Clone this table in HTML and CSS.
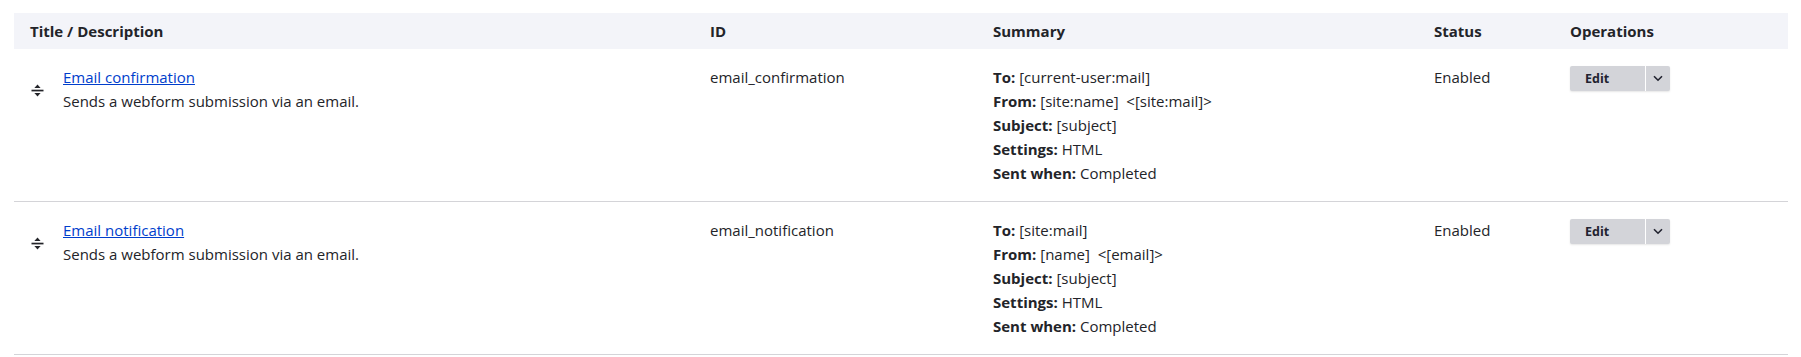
FILE: index.html
```html
<!DOCTYPE html>
<html lang="en">
<head>
    <meta charset="UTF-8">
    <title>Webform handlers</title>
    <link rel="stylesheet" href="styles.css">
</head>
<body>
    <div class="page">
        <table class="handlers">
            <colgroup>
                <col class="col-title">
                <col class="col-id">
                <col class="col-summary">
                <col class="col-status">
                <col class="col-ops">
            </colgroup>
            <thead>
                <tr>
                    <th>Title / Description</th>
                    <th>ID</th>
                    <th>Summary</th>
                    <th>Status</th>
                    <th>Operations</th>
                </tr>
            </thead>
            <tbody>
                <tr>
                    <td>
                        <div class="title-cell">
                            <span class="drag-handle">
                                <svg width="13" height="15" viewBox="0 0 13 15">
                                    <path d="M6.5 1.5 L9.6 5 H3.4 Z" fill="#232429"/>
                                    <rect x="0.5" y="6.7" width="12" height="1.7" fill="#232429"/>
                                    <path d="M6.5 13.5 L9.6 10 H3.4 Z" fill="#232429"/>
                                </svg>
                            </span>
                            <div>
                                <a href="#" class="handler-link">Email confirmation</a>
                                <div>Sends a webform submission via an email.</div>
                            </div>
                        </div>
                    </td>
                    <td>email_confirmation</td>
                    <td>
                        <div><b>To:</b> [current-user:mail]</div>
                        <div><b>From:</b> [site:name]&nbsp; &lt;[site:mail]&gt;</div>
                        <div><b>Subject:</b> [subject]</div>
                        <div><b>Settings:</b> HTML</div>
                        <div><b>Sent when:</b> Completed</div>
                    </td>
                    <td>Enabled</td>
                    <td>
                        <div class="dropbutton">
                            <a href="#" class="dropbutton-action">Edit</a>
                            <span class="dropbutton-toggle">
                                <svg width="10" height="7" viewBox="0 0 10 7">
                                    <path d="M1 1.2 L5 5.2 L9 1.2" fill="none" stroke="#222330" stroke-width="1.6"/>
                                </svg>
                            </span>
                        </div>
                    </td>
                </tr>
                <tr>
                    <td>
                        <div class="title-cell">
                            <span class="drag-handle">
                                <svg width="13" height="15" viewBox="0 0 13 15">
                                    <path d="M6.5 1.5 L9.6 5 H3.4 Z" fill="#232429"/>
                                    <rect x="0.5" y="6.7" width="12" height="1.7" fill="#232429"/>
                                    <path d="M6.5 13.5 L9.6 10 H3.4 Z" fill="#232429"/>
                                </svg>
                            </span>
                            <div>
                                <a href="#" class="handler-link">Email notification</a>
                                <div>Sends a webform submission via an email.</div>
                            </div>
                        </div>
                    </td>
                    <td>email_notification</td>
                    <td>
                        <div><b>To:</b> [site:mail]</div>
                        <div><b>From:</b> [name]&nbsp; &lt;[email]&gt;</div>
                        <div><b>Subject:</b> [subject]</div>
                        <div><b>Settings:</b> HTML</div>
                        <div><b>Sent when:</b> Completed</div>
                    </td>
                    <td>Enabled</td>
                    <td>
                        <div class="dropbutton">
                            <a href="#" class="dropbutton-action">Edit</a>
                            <span class="dropbutton-toggle">
                                <svg width="10" height="7" viewBox="0 0 10 7">
                                    <path d="M1 1.2 L5 5.2 L9 1.2" fill="none" stroke="#222330" stroke-width="1.6"/>
                                </svg>
                            </span>
                        </div>
                    </td>
                </tr>
            </tbody>
        </table>
    </div>
</body>
</html>
```

FILE: styles.css
```css
body {
    margin: 0;
    background: #fff;
    color: #232429;
    font-family: "Open Sans", "Noto Sans", Arial, sans-serif;
    font-size: 15px;
}

.page {
    padding: 13px 13px 0 14px;
}

/* Handlers table */
.handlers {
    width: 100%;
    table-layout: fixed;
    border-collapse: collapse;
}

.col-title { width: 680px; }
.col-id { width: 283px; }
.col-summary { width: 441px; }
.col-status { width: 136px; }

.handlers th {
    background: #f3f4f9;
    height: 36px;
    padding: 0 16px;
    text-align: left;
    font-size: 15px;
    font-weight: 700;
    line-height: 20px;
}

.handlers td {
    padding: 16px;
    vertical-align: top;
    line-height: 24px;
    border-bottom: 1px solid #d4d4d8;
}

.handlers b {
    font-weight: 700;
}

.title-cell {
    display: flex;
    align-items: center;
}

.drag-handle {
    display: flex;
    width: 32px;
    padding-left: 1px;
    margin-top: 3px;
}

.handler-link {
    color: #003ecc;
}

/* Dropbutton */
.dropbutton {
    display: inline-flex;
    height: 25px;
    margin-top: 1px;
    border-radius: 2px;
    background: #d3d4d9;
    box-shadow: 0 1px 2px rgba(0, 0, 0, 0.1);
    overflow: hidden;
}

.dropbutton-action {
    width: 76px;
    padding-left: 15px;
    box-sizing: border-box;
    color: #222330;
    font-size: 12.5px;
    font-weight: 700;
    line-height: 25px;
    text-decoration: none;
    border-right: 1px solid #fff;
}

.dropbutton-toggle {
    display: flex;
    width: 24px;
    justify-content: center;
    align-items: center;
}
```
